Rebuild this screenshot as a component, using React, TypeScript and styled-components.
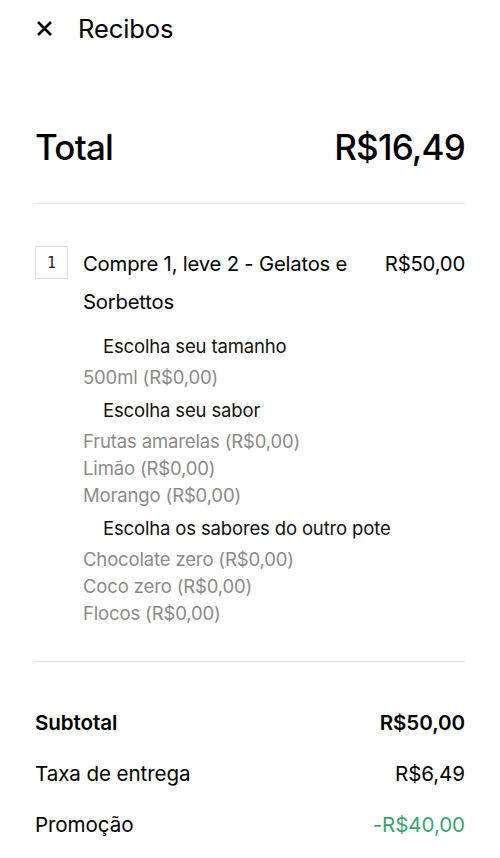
import React from 'react';
import styled, { createGlobalStyle } from 'styled-components';

const GlobalStyle = createGlobalStyle`
  html, body {
    margin: 0;
    padding: 0;
    background: #ffffff;
  }
  body {
    font-family: Inter, "Noto Sans", sans-serif;
    color: #000000;
    -webkit-font-smoothing: antialiased;
  }
`;

const Page = styled.div`
  width: 500px;
  height: 858px;
  overflow: hidden;
  padding: 0 35px;
  box-sizing: border-box;
`;

const Header = styled.header`
  display: flex;
  align-items: center;
  height: 56px;
  gap: 25px;
`;

const CloseButton = styled.button`
  display: flex;
  align-items: center;
  justify-content: center;
  width: 18px;
  height: 18px;
  padding: 0;
  border: none;
  background: none;
  cursor: pointer;
`;

const HeaderTitle = styled.h1`
  margin: 0;
  font-size: 25.5px;
  font-weight: 400;
  letter-spacing: -0.1px;
`;

const TotalRow = styled.div`
  display: flex;
  justify-content: space-between;
  align-items: center;
  padding: 70px 0 35px;
  font-size: 35px;
  font-weight: 500;
  letter-spacing: -0.8px;
`;

const Divider = styled.hr`
  margin: 0;
  border: none;
  border-top: 1px solid #e3e3e3;
`;

const ItemSection = styled.section`
  padding: 42px 0 31px;
`;

const ItemRow = styled.div`
  display: grid;
  grid-template-columns: 33px 1fr auto;
  column-gap: 15px;
  align-items: start;
`;

const QtyBox = styled.div`
  width: 33px;
  height: 33px;
  box-sizing: border-box;
  border: 1px solid #dcdcdc;
  display: flex;
  align-items: center;
  justify-content: center;
  font-family: "DejaVu Sans Mono", "Liberation Mono", monospace;
  font-size: 15px;
  color: #222;
`;

const ItemName = styled.div`
  font-size: 20.3px;
  line-height: 38px;
  margin-top: -1px;
  letter-spacing: -0.2px;
`;

const ItemPrice = styled.div`
  font-size: 20.3px;
  line-height: 38px;
  margin-top: -1px;
  letter-spacing: -0.2px;
  padding-left: 6px;
`;

const Options = styled.div`
  padding-left: 48px;
  margin-top: 9px;
  display: flex;
  flex-direction: column;
`;

const OptionGroup = styled.div`
  display: flex;
  flex-direction: column;
`;

const GroupTitle = styled.div`
  padding-left: 20px;
  font-size: 18.5px;
  line-height: 32px;
  letter-spacing: -0.15px;
  color: #111;
`;

const OptionLine = styled.div`
  font-size: 18.5px;
  line-height: 27px;
  letter-spacing: -0.15px;
  color: #8a8a8a;
`;

const OptionList = styled.div`
  display: flex;
  flex-direction: column;
  padding: 2px 0 3px;
`;

const Summary = styled.section`
  padding-top: 35px;
  display: flex;
  flex-direction: column;
`;

const SummaryRow = styled.div<{ $bold?: boolean }>`
  display: flex;
  justify-content: space-between;
  align-items: center;
  height: 51px;
  font-size: 20.6px;
  letter-spacing: -0.1px;
  font-weight: ${({ $bold }) => ($bold ? 600 : 400)};
`;

const Amount = styled.span<{ $tone?: 'promo' }>`
  color: ${({ $tone }) => ($tone === 'promo' ? '#3aa374' : 'inherit')};
`;

const groups = [
  { title: 'Escolha seu tamanho', items: ['500ml (R$0,00)'] },
  {
    title: 'Escolha seu sabor',
    items: ['Frutas amarelas (R$0,00)', 'Limão (R$0,00)', 'Morango (R$0,00)'],
  },
  {
    title: 'Escolha os sabores do outro pote',
    items: ['Chocolate zero (R$0,00)', 'Coco zero (R$0,00)', 'Flocos (R$0,00)'],
  },
];

const App: React.FC = () => {
  return (
    <Page>
      <GlobalStyle />
      <Header>
        <CloseButton aria-label="Fechar">
          <svg width="17" height="17" viewBox="0 0 17 17">
            <path d="M2 2 L15 15 M15 2 L2 15" stroke="#000" strokeWidth="2.6" />
          </svg>
        </CloseButton>
        <HeaderTitle>Recibos</HeaderTitle>
      </Header>

      <TotalRow>
        <span>Total</span>
        <span>R$16,49</span>
      </TotalRow>
      <Divider />

      <ItemSection>
        <ItemRow>
          <QtyBox>1</QtyBox>
          <ItemName>Compre 1, leve 2 - Gelatos e Sorbettos</ItemName>
          <ItemPrice>R$50,00</ItemPrice>
        </ItemRow>
        <Options>
          {groups.map((g) => (
            <OptionGroup key={g.title}>
              <GroupTitle>{g.title}</GroupTitle>
              <OptionList>
                {g.items.map((it) => (
                  <OptionLine key={it}>{it}</OptionLine>
                ))}
              </OptionList>
            </OptionGroup>
          ))}
        </Options>
      </ItemSection>
      <Divider />

      <Summary>
        <SummaryRow $bold>
          <span>Subtotal</span>
          <Amount>R$50,00</Amount>
        </SummaryRow>
        <SummaryRow>
          <span>Taxa de entrega</span>
          <Amount>R$6,49</Amount>
        </SummaryRow>
        <SummaryRow>
          <span>Promoção</span>
          <Amount $tone="promo">-R$40,00</Amount>
        </SummaryRow>
      </Summary>
    </Page>
  );
};

export default App;
